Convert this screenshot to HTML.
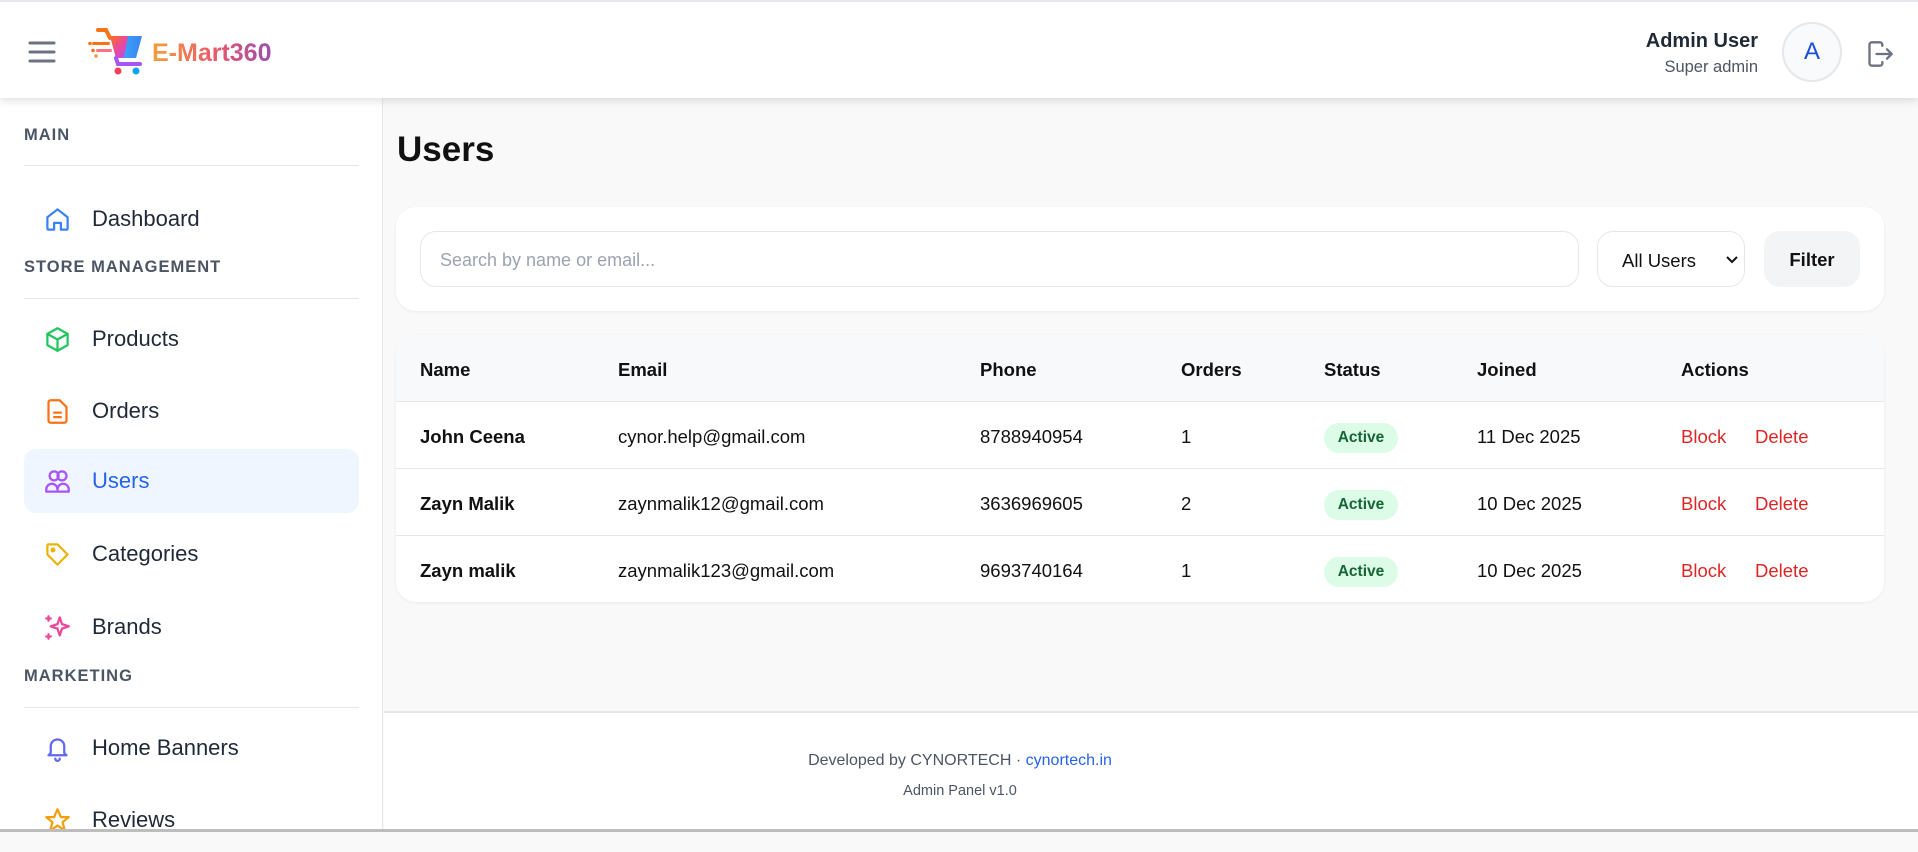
<!DOCTYPE html>
<html><head><meta charset="utf-8"><style>
*{box-sizing:border-box;margin:0;padding:0}
body{width:1918px;height:832px;overflow:hidden;background:#f9f9f9;font-family:"Liberation Sans",Arial,sans-serif;color:#111;position:relative}
.abs{position:absolute}
.hdr{left:0;top:0;width:1918px;height:98px;background:#fff;border-top:2px solid #e5e7eb;box-shadow:0 3px 8px rgba(0,0,0,.12);z-index:5}
.side{left:0;top:98px;width:383px;height:734px;background:#fff;border-right:1px solid #e5e7eb}
.sec{position:absolute;left:24px;font-size:16.5px;font-weight:bold;letter-spacing:1px;color:#4b5563}
.line{position:absolute;left:24px;width:335px;height:1px;background:#e5e7eb}
.item{position:absolute;left:24px;width:335px;height:64px;border-radius:12px;font-size:22px;color:#1f2937;display:flex;align-items:center;padding-left:20px}
.item svg{width:27px;height:27px;margin-right:21px;fill:none;stroke-width:2;stroke-linecap:round;stroke-linejoin:round}
.item.act{background:#eff6ff;color:#2563eb}
.card{background:#fff;border-radius:20px;box-shadow:0 1px 3px rgba(0,0,0,.06)}
.th{position:absolute;font-weight:bold;font-size:18.5px;color:#111}
.td{position:absolute;font-size:18.5px;color:#111}
.badge{position:absolute;width:74px;height:30px;border-radius:15px;background:#dcfce7;color:#166534;font-size:15.5px;font-weight:bold;text-align:center;line-height:30px}
.red{color:#dc2626}
</style></head><body>
<div class="abs hdr">
  <svg class="abs" style="left:28px;top:38px" width="28" height="24" viewBox="0 0 28 24"><g stroke="#6b7280" stroke-width="3" stroke-linecap="round"><line x1="2" y1="3" x2="26" y2="3"/><line x1="2" y1="12" x2="26" y2="12"/><line x1="2" y1="21" x2="26" y2="21"/></g></svg>
  <svg class="abs" style="left:88px;top:24px" width="60" height="50" viewBox="0 0 60 50">
    <defs><linearGradient id="cg" x1="0" y1="0" x2="1" y2="1"><stop offset="0" stop-color="#f97316"/><stop offset=".5" stop-color="#ec4899"/><stop offset="1" stop-color="#a855f7"/></linearGradient>
    <linearGradient id="cb" x1="0" y1="0" x2="1" y2="0"><stop offset="0" stop-color="#38bdf8"/><stop offset="1" stop-color="#3b82f6"/></linearGradient></defs>
    <path d="M10 4h8l4 8" stroke="#f97316" stroke-width="4" fill="none" stroke-linecap="round"/>
    <path d="M22 10h32l-6 22H28z" fill="url(#cb)"/>
    <path d="M22 10h18l-4 22H28z" fill="url(#cg)"/>
    <path d="M28 32l2 6h22" stroke="#a855f7" stroke-width="4" fill="none" stroke-linecap="round"/>
    <rect x="4" y="16" width="18" height="3" rx="1.5" fill="#f97316"/><rect x="8" y="23" width="16" height="3" rx="1.5" fill="#fb7185"/>
    <circle cx="2" cy="17.5" r="1.8" fill="#f97316"/><circle cx="5" cy="24.5" r="1.8" fill="#f97316"/><circle cx="8" cy="30" r="1.8" fill="#fb923c"/>
    <circle cx="30" cy="45" r="3.5" fill="#f43f5e"/><circle cx="48" cy="45" r="3.5" fill="#0ea5e9"/>
  </svg>
  <div class="abs" style="left:152px;top:37px;font-size:25px;font-weight:bold;background:linear-gradient(90deg,#f59e3b,#e8566d 55%,#9b4fb0);-webkit-background-clip:text;background-clip:text;color:transparent">E-Mart360</div>
  <div class="abs" style="right:160px;top:28px;font-size:20px;font-weight:bold;color:#1f2937;text-align:right">Admin User</div>
  <div class="abs" style="right:160px;top:56px;font-size:16.5px;color:#4b5563;text-align:right">Super admin</div>
  <div class="abs" style="left:1782px;top:20px;width:60px;height:60px;border-radius:50%;border:2px solid #e5e7eb;background:#f9fafb;color:#1d4ed8;font-size:24px;text-align:center;line-height:56px">A</div>
  <svg class="abs" style="left:1866px;top:38px" width="28" height="28" viewBox="0 0 24 24" fill="none" stroke="#6b7280" stroke-width="2" stroke-linecap="round" stroke-linejoin="round"><path d="M14 5V4a2 2 0 0 0-2-2H5a2 2 0 0 0-2 2v16a2 2 0 0 0 2 2h7a2 2 0 0 0 2-2v-1"/><path d="M9 12h13M18 8l4 4-4 4"/></svg>
</div>

<div class="abs side">
  <div class="sec" style="top:28px">MAIN</div>
  <div class="line" style="top:67px"></div>
  <div class="item" style="top:89px"><svg viewBox="0 0 24 24" stroke="#3b82f6"><path d="M3 10l9-7 9 7v10a1 1 0 0 1-1 1h-5v-6H9v6H4a1 1 0 0 1-1-1z"/></svg>Dashboard</div>
  <div class="sec" style="top:160px">STORE MANAGEMENT</div>
  <div class="line" style="top:200px"></div>
  <div class="item" style="top:209px"><svg viewBox="0 0 24 24" stroke="#22c55e"><path d="M12 2l9 5v10l-9 5-9-5V7z"/><path d="M3 7l9 5 9-5M12 12v10"/></svg>Products</div>
  <div class="item" style="top:281px"><svg viewBox="0 0 24 24" stroke="#f97316"><path d="M14 2H6a2 2 0 0 0-2 2v16a2 2 0 0 0 2 2h12a2 2 0 0 0 2-2V8z"/><path d="M9 13h6M9 17h6"/></svg>Orders</div>
  <div class="item act" style="top:351px"><svg viewBox="0 0 24 24" stroke="#a855f7"><circle cx="9" cy="7" r="4"/><circle cx="16" cy="7" r="4"/><path d="M2 21v-2a5 5 0 0 1 10 0v2zM12 21v-2a5 5 0 0 1 10 0v2z"/></svg>Users</div>
  <div class="item" style="top:424px"><svg viewBox="0 0 24 24" stroke="#eab308"><path d="M3 12V4a1 1 0 0 1 1-1h8l9 9-9 9z"/><circle cx="8" cy="8" r="1.2"/></svg>Categories</div>
  <div class="item" style="top:497px"><svg viewBox="0 0 24 24" stroke="#ec4899"><path d="M14 3l2 6 6 2-6 2-2 6-2-6-6-2 6-2z"/><path d="M4 2v4M2 4h4M4 18v4M2 20h4"/></svg>Brands</div>
  <div class="sec" style="top:569px">MARKETING</div>
  <div class="line" style="top:609px"></div>
  <div class="item" style="top:618px"><svg viewBox="0 0 24 24" stroke="#6366f1"><path d="M6 16V10a6 6 0 0 1 12 0v6l2 2H4z"/><path d="M10 21a2 2 0 0 0 4 0"/></svg>Home Banners</div>
  <div class="item" style="top:690px"><svg viewBox="0 0 24 24" stroke="#f59e0b"><path d="M12 2l3 7h7l-5.5 4.5 2 7.5-6.5-4.5-6.5 4.5 2-7.5L2 9h7z"/></svg>Reviews</div>
</div>

<div class="abs" style="left:397px;top:130px;font-size:35px;font-weight:bold;color:#111">Users</div>

<div class="abs card" style="left:396px;top:207px;width:1488px;height:104px">
  <div class="abs" style="left:24px;top:24px;width:1159px;height:56px;border:1px solid #e5e7eb;border-radius:16px;font-size:18px;color:#9ca3af;padding:18px 0 0 19px">Search by name or email...</div>
  <div class="abs" style="left:1201px;top:24px;width:148px;height:56px;border:1px solid #e5e7eb;border-radius:16px;font-size:18.5px;color:#111;padding:18px 0 0 24px">All Users<svg class="abs" style="left:128px;top:24px" width="12" height="8" viewBox="0 0 12 8"><path d="M1 1l5 5 5-5" stroke="#111" stroke-width="2" fill="none"/></svg></div>
  <div class="abs" style="left:1368px;top:24px;width:96px;height:56px;border-radius:16px;background:#f3f4f6;font-size:18.5px;font-weight:bold;text-align:center;line-height:58px">Filter</div>
</div>

<div class="abs card" style="left:396px;top:335px;width:1488px;height:267px;overflow:hidden">
  <div class="abs" style="left:0;top:0;width:1488px;height:67px;background:#f8f9fb;border-bottom:1px solid #e5e7eb"></div>
  <div class="abs" style="left:0;top:133px;width:1488px;height:1px;background:#e5e7eb"></div>
  <div class="abs" style="left:0;top:200px;width:1488px;height:1px;background:#e5e7eb"></div>
  <div class="th" style="left:24px;top:24px">Name</div><div class="th" style="left:222px;top:24px">Email</div><div class="th" style="left:584px;top:24px">Phone</div><div class="th" style="left:785px;top:24px">Orders</div><div class="th" style="left:928px;top:24px">Status</div><div class="th" style="left:1081px;top:24px">Joined</div><div class="th" style="left:1285px;top:24px">Actions</div>

  <div class="th" style="left:24px;top:91px">John Ceena</div><div class="td" style="left:222px;top:91px">cynor.help@gmail.com</div><div class="td" style="left:584px;top:91px">8788940954</div><div class="td" style="left:785px;top:91px">1</div><div class="badge" style="left:928px;top:88px">Active</div><div class="td" style="left:1081px;top:91px">11 Dec 2025</div><div class="td red" style="left:1285px;top:91px">Block</div><div class="td red" style="left:1359px;top:91px">Delete</div>

  <div class="th" style="left:24px;top:158px">Zayn Malik</div><div class="td" style="left:222px;top:158px">zaynmalik12@gmail.com</div><div class="td" style="left:584px;top:158px">3636969605</div><div class="td" style="left:785px;top:158px">2</div><div class="badge" style="left:928px;top:155px">Active</div><div class="td" style="left:1081px;top:158px">10 Dec 2025</div><div class="td red" style="left:1285px;top:158px">Block</div><div class="td red" style="left:1359px;top:158px">Delete</div>

  <div class="th" style="left:24px;top:225px">Zayn malik</div><div class="td" style="left:222px;top:225px">zaynmalik123@gmail.com</div><div class="td" style="left:584px;top:225px">9693740164</div><div class="td" style="left:785px;top:225px">1</div><div class="badge" style="left:928px;top:222px">Active</div><div class="td" style="left:1081px;top:225px">10 Dec 2025</div><div class="td red" style="left:1285px;top:225px">Block</div><div class="td red" style="left:1359px;top:225px">Delete</div>
</div>

<div class="abs" style="left:384px;top:711px;width:1534px;height:118px;background:#fff;border-top:2px solid #e5e7eb"></div>
<div class="abs" style="left:660px;top:752px;width:600px;text-align:center;font-size:16px;color:#4b5563">Developed by CYNORTECH · <span style="color:#2563eb">cynortech.in</span></div>
<div class="abs" style="left:660px;top:783px;width:600px;text-align:center;font-size:14.5px;color:#4b5563">Admin Panel v1.0</div>
<div class="abs" style="left:0;top:829px;width:1918px;height:3px;background:#bdbdbd"></div>
</body></html>
